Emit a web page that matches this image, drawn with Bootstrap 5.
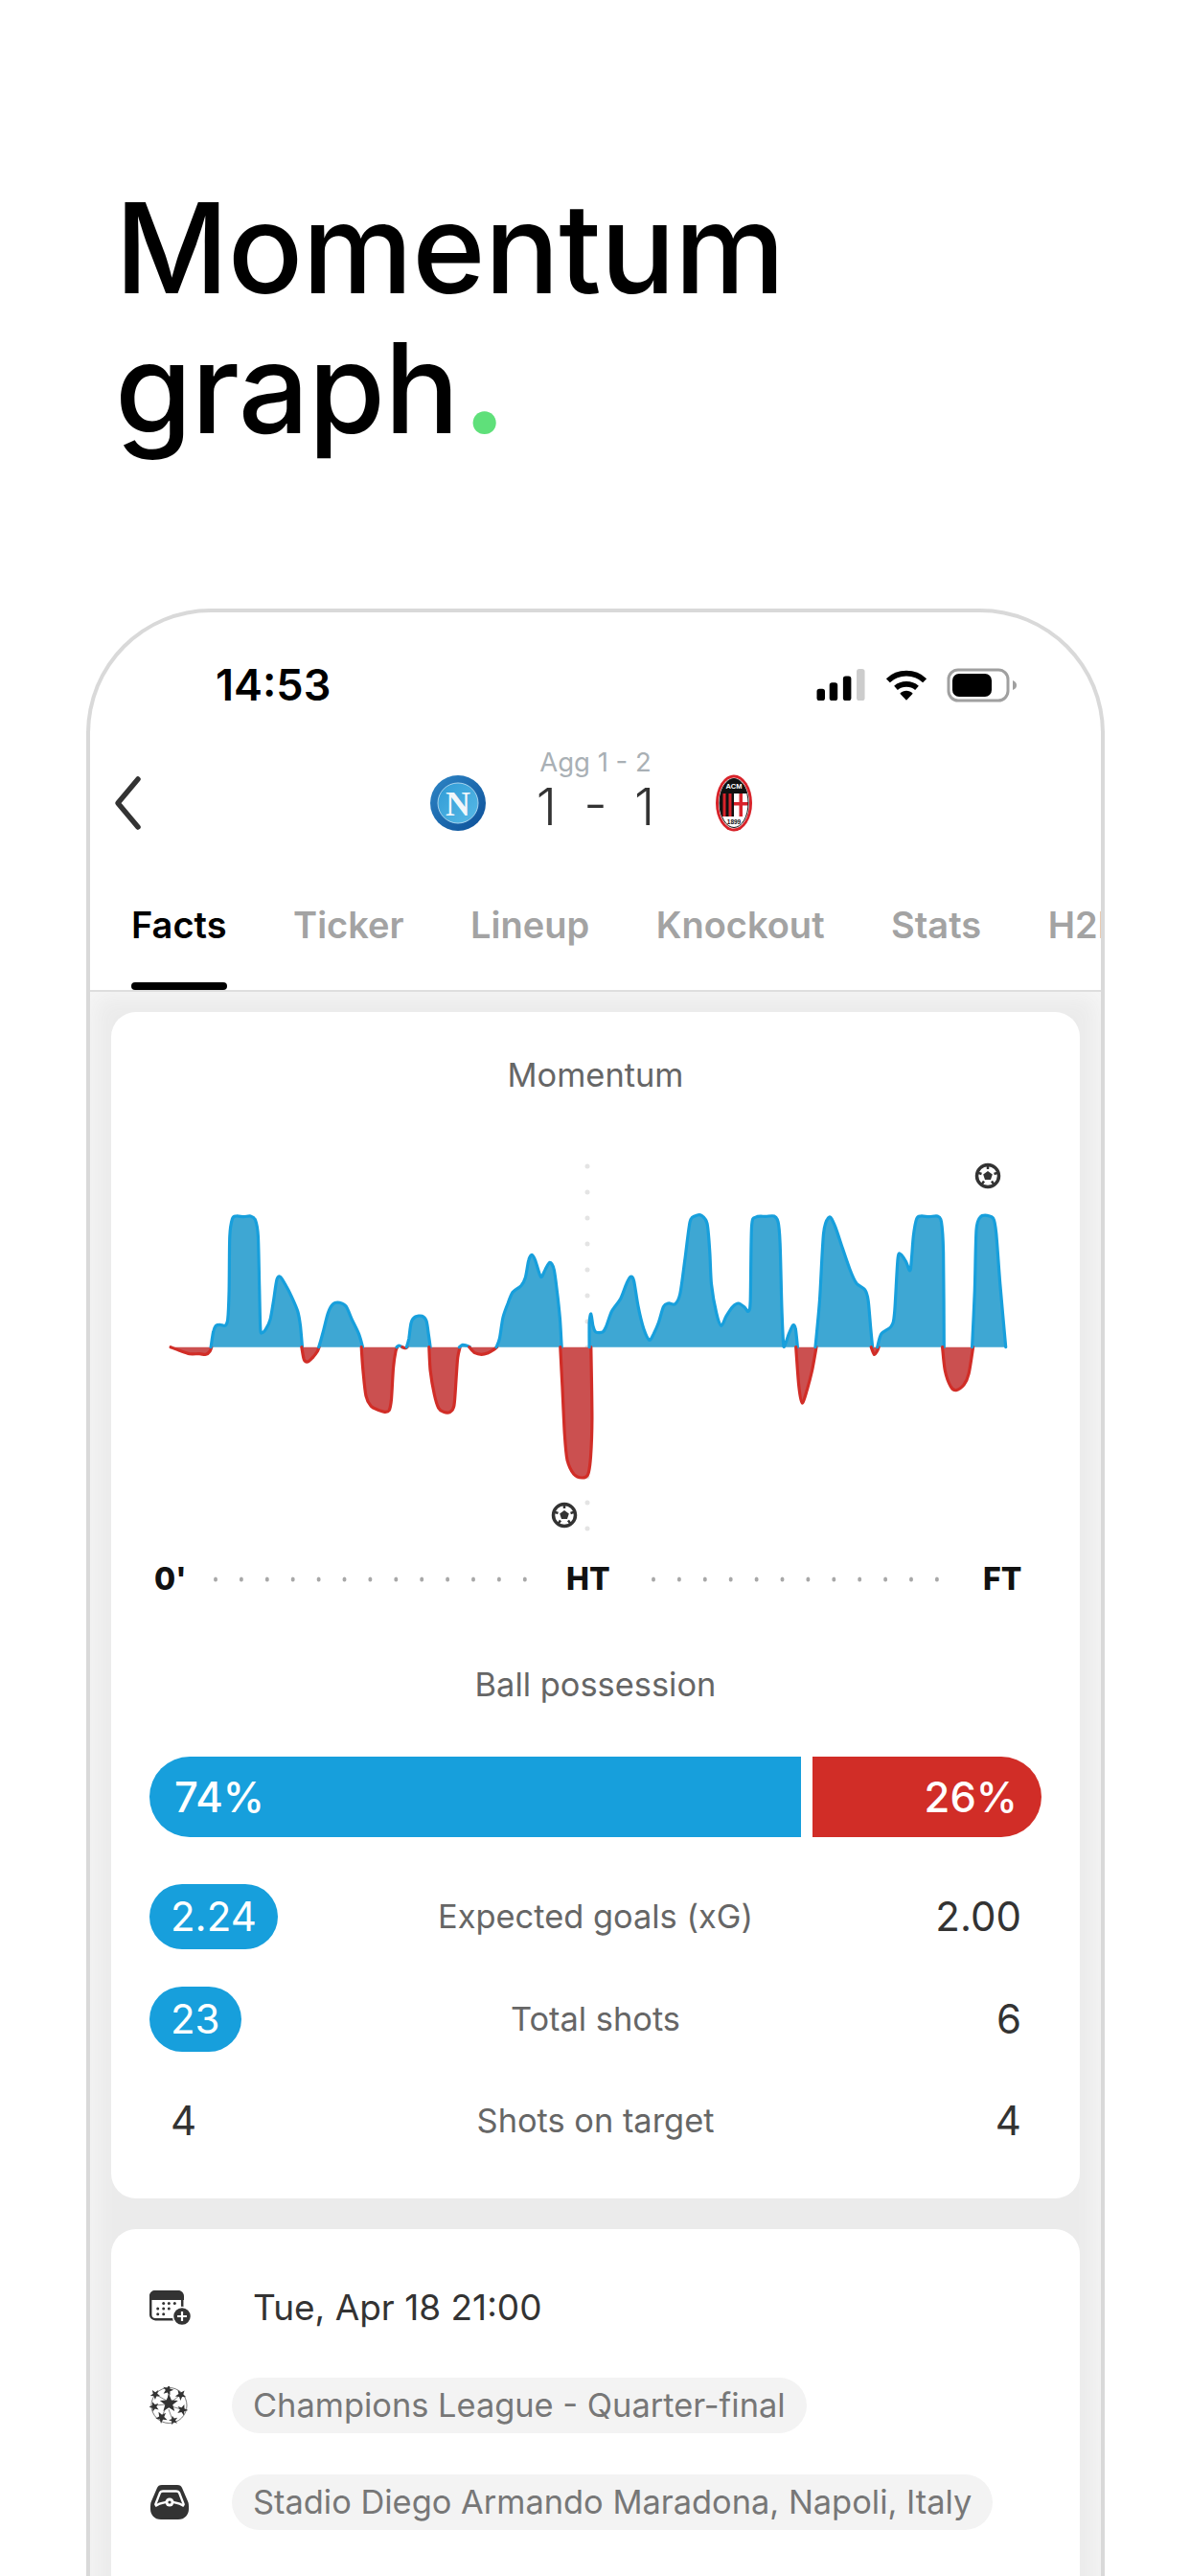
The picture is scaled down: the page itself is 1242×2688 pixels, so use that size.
<!DOCTYPE html>
<html lang="en">
<head>
<meta charset="utf-8">
<title>Momentum graph</title>
<link href="https://cdn.jsdelivr.net/npm/bootstrap@5.3.0/dist/css/bootstrap.min.css" rel="stylesheet">
<style>
html,body{margin:0;background:#fff;height:2688px;overflow:hidden;font-family:Inter,"Liberation Sans",sans-serif;}
.hero{padding:186px 0 0 120px;height:635px;}
.hero-title{font-family:"Inter",sans-serif;font-weight:500;font-size:130px;line-height:146px;color:#000;letter-spacing:-.8px;margin:0;}
.hero-dot{color:#5fe07a;font-weight:800;margin-left:4px;}
.phone{margin:0 89px 0 90px;height:2053px;border:4px solid #d9d9d9;border-bottom:0;border-radius:130px 130px 0 0;overflow:hidden;background:#fff;}
.status-row{height:156px;padding:48px 87px 0 131px;}
.status-time{font-size:45px;font-weight:600;line-height:56px;color:#000;}
.status-icons{gap:20px;height:56px;}
.match-head{height:86px;position:relative;}
.back-ico{position:absolute;left:23px;top:14px;}
.score-wrap{width:180px;text-align:center;margin-bottom:8px;}
.agg{font-size:27.500px;line-height:28px;color:#a9b0b5;margin-top:-14px;margin-bottom:2px;}
.score{font-size:54px;font-weight:300;line-height:62px;color:#333;word-spacing:13px;}
.logo-left{margin-right:24px;}
.logo-right{margin-left:24px;}
.tabs-row{padding:61px 0 0 43px;gap:69.500px;white-space:nowrap;flex-wrap:nowrap;border-bottom:2px solid #dedede;height:154px;}
.tab-item{font-size:38px;line-height:46px;font-weight:600;color:#a3a3a3;height:91px;position:relative;flex:none;}
.tab-item.on{color:#000;}
.tab-item.on::after{content:"";position:absolute;left:0;right:0;bottom:0;height:8px;background:#000;border-radius:5px;}
.feed{background:#ebebeb;padding:21px 22px 0;box-shadow:inset 0 0 24px 4px #f7f7f7;height:1700px;}
.sheet{border:0;border-radius:26px;background:#fff;}
.sheet-a{height:1238px;padding:0 40px;margin-bottom:32px;}
.sheet-b{height:500px;padding:53px 40px;}
.sect-label{font-size:34.400px;line-height:44px;color:#666;text-align:center;}
.sect-first{padding-top:44px;height:88px;}
.chart-box{display:block;margin-top:56px;}
.axis-row{height:40px;margin-top:16px;font-size:32px;line-height:40px;font-weight:800;color:#111;padding-left:5px;white-space:nowrap;}
.ax-zero{width:30px;flex:none;}
.ax-ht{width:45px;flex:none;margin-left:39px;}
.ax-dots-a{margin-left:31px;flex:none;}
.ax-dots-b{margin-left:43px;flex:none;}
.ax-ft{margin-left:17px;flex:none;}
.sect-second{margin-top:68px;}
.poss-bar{height:84px;margin-top:53px;gap:12px;}
.poss-a,.poss-b{color:#fff;font-size:43.500px;font-weight:500;line-height:84px;}
.poss-a{background:#179fdc;border-radius:42px 0 0 42px;padding-left:26px;}
.poss-b{background:#d12d27;border-radius:0 42px 42px 0;padding-right:25px;text-align:right;}
.stat-rows{margin-top:49px;}
.stat-row{display:grid;grid-template-columns:1fr auto 1fr;align-items:center;height:68px;margin-bottom:38.500px;}
.stat-val{font-size:42px;line-height:68px;color:#333;}
.stat-val.right{text-align:right;padding-right:21px;}
.stat-val.left{padding-left:22px;}
.stat-pill{display:inline-block;background:#179fdc;color:#fff;padding:0 22px;height:68px;}
.info-row{height:58px;margin-bottom:43.500px;}
.info-ico{width:86px;flex:none;}
.info-date{font-size:37px;line-height:58px;color:#333;padding-left:22px;}
.info-pill{background:#f3f3f3;color:#777;font-size:34.400px;line-height:58px;padding:0 22px;height:58px;}
</style>
</head>
<body>
<header class="hero">
  <h1 class="hero-title">Momentum<br>graph<span class="hero-dot">.</span></h1>
</header>
<main class="phone">
  <div class="status-row d-flex justify-content-between">
    <div class="status-time">14:53</div>
    <div class="status-icons d-flex align-items-center">
      <svg width="52" height="34" viewBox="0 0 54 36"><rect x="0" y="22" width="9" height="13" rx="3" fill="#000"/><rect x="14" y="15" width="9" height="20" rx="3" fill="#000"/><rect x="29" y="8" width="9" height="27" rx="3" fill="#000"/><rect x="44" y="0" width="9" height="35" rx="3" fill="#ccc"/></svg>
      <svg width="44" height="33" viewBox="0 0 46 34"><path d="M3 11.500C14 1 32 1 43 11.500" fill="none" stroke="#000" stroke-width="6"/><path d="M11.500 19.500C18 14 28 14 34.500 19.500" fill="none" stroke="#000" stroke-width="6"/><path d="M16 25.500C20 21.500 26 21.500 30 25.500L23 33Z" fill="#000"/></svg>
      <svg width="74" height="36" viewBox="0 0 74 36"><rect x="2" y="2" width="62" height="32" rx="10" fill="none" stroke="#a0a0a0" stroke-width="3"/><rect x="6" y="6" width="41" height="24" rx="7" fill="#000"/><path d="M69 13c3 1 4 3 4 5s-1 4-4 5z" fill="#a0a0a0"/></svg>
    </div>
  </div>
  <div class="match-head d-flex justify-content-center align-items-center">
    <svg class="back-ico" width="32" height="58" viewBox="0 0 32 58"><path d="M27 4 6 29l21 25" fill="none" stroke="#333" stroke-width="5.500" stroke-linecap="round" stroke-linejoin="round"/></svg>
    <svg width="60" height="60" viewBox="0 0 60 60" class="logo-left">
      <defs><linearGradient id="napR" x1="0" y1="0" x2="1" y2="1"><stop offset="0" stop-color="#2e86c6"/><stop offset="1" stop-color="#0c4f98"/></linearGradient><linearGradient id="napI" x1="0" y1="0" x2="1" y2="1"><stop offset="0" stop-color="#2f9bd6"/><stop offset="1" stop-color="#58b9e6"/></linearGradient></defs>
      <circle cx="30" cy="30" r="29" fill="url(#napR)"/><circle cx="30" cy="30" r="21" fill="url(#napI)" stroke="#a8d4ee" stroke-width="1"/>
      <text x="30" y="43" text-anchor="middle" font-family="Liberation Serif" font-weight="700" font-size="36" fill="#f1f7fb">N</text>
    </svg>
    <div class="score-wrap">
      <div class="agg">Agg 1 - 2</div>
      <div class="score">1 - 1</div>
    </div>
    <svg width="60" height="60" viewBox="-10 0 60 60" class="logo-right">
      <defs><clipPath id="acmClip"><ellipse cx="20" cy="30" rx="15" ry="25.500"/></clipPath></defs>
      <ellipse cx="20" cy="30" rx="19" ry="29.500" fill="#d8232a"/>
      <ellipse cx="20" cy="30" rx="16" ry="26.500" fill="#fff"/>
      <g clip-path="url(#acmClip)">
        <rect x="0" y="0" width="40" height="20" fill="#111"/>
        <rect x="0" y="20" width="20" height="24" fill="#111"/>
        <path d="M8.500 20h3v24h-3zM14.500 20h3v24h-3z" fill="#d8232a"/>
        <rect x="20" y="20" width="20" height="24" fill="#fff"/>
        <path d="M25.500 20h3.500v24h-3.500zM20 29h16v3.500H20z" fill="#d8232a"/>
        <rect x="0" y="44" width="40" height="16" fill="#fff"/>
      </g>
      <ellipse cx="20" cy="30" rx="15" ry="25.500" fill="none" stroke="#111" stroke-width="1"/>
      <text x="20" y="15" text-anchor="middle" font-family="Liberation Sans" font-size="7.500" font-weight="700" fill="#fff">ACM</text>
      <text x="20" y="52" text-anchor="middle" font-family="Liberation Sans" font-size="6.500" font-weight="700" fill="#111">1899</text>
    </svg>
  </div>
  <nav class="tabs-row d-flex">
    <div class="tab-item on">Facts</div>
    <div class="tab-item">Ticker</div>
    <div class="tab-item">Lineup</div>
    <div class="tab-item">Knockout</div>
    <div class="tab-item">Stats</div>
    <div class="tab-item">H2H</div>
  </nav>
  <div class="feed">
    <section class="card sheet sheet-a">
      <div class="sect-label sect-first">Momentum</div>
      <svg class="chart-box" id="chart" width="932" height="412" viewBox="0 0 932 412">
        <defs>
          <g id="ballmark"><circle r="11.500" fill="#fff" stroke="#333" stroke-width="3.500"/><path d="M0-5 4.800-1.500 3 4H-3L-4.800-1.500Z" fill="#333"/><path d="M0-11 0-7M10.500-3.400 6.500-2M6.500 9 4 5.500M-6.500 9-4 5.500M-10.500-3.400-6.500-2" stroke="#333" stroke-width="2.500"/></g>
        </defs>
        <g id="vdots" fill="#e4e4e4"></g>
        <g id="areas"></g>
        <use href="#ballmark" x="875" y="27"/>
        <use href="#ballmark" x="433" y="381"/>
      </svg>
      <div class="axis-row d-flex align-items-center">
        <span class="ax-zero">0'</span>
        <svg class="ax-dots-a" id="dotsA" width="330" height="6" viewBox="0 0 330 6" fill="#a8a8a8"></svg>
        <span class="ax-ht">HT</span>
        <svg class="ax-dots-b" id="dotsB" width="330" height="6" viewBox="0 0 330 6" fill="#a8a8a8"></svg>
        <span class="ax-ft">FT</span>
      </div>
      <div class="sect-label sect-second">Ball possession</div>
      <div class="poss-bar d-flex">
        <div class="poss-a" style="width:680px">74%</div>
        <div class="poss-b" style="width:239px">26%</div>
      </div>
      <div class="stat-rows">
        <div class="stat-row">
          <div class="stat-val"><span class="stat-pill rounded-pill">2.24</span></div>
          <div class="sect-label">Expected goals (xG)</div>
          <div class="stat-val right">2.00</div>
        </div>
        <div class="stat-row">
          <div class="stat-val"><span class="stat-pill rounded-pill">23</span></div>
          <div class="sect-label">Total shots</div>
          <div class="stat-val right">6</div>
        </div>
        <div class="stat-row">
          <div class="stat-val left">4</div>
          <div class="sect-label">Shots on target</div>
          <div class="stat-val right">4</div>
        </div>
      </div>
    </section>
    <section class="card sheet sheet-b">
      <div class="info-row d-flex align-items-center">
        <div class="info-ico"><svg width="44" height="37" viewBox="0 0 44 37"><rect x="1.200" y="1.200" width="33" height="29" rx="5" fill="#fff" stroke="#333" stroke-width="2.500"/><path d="M0 6a6 6 0 0 1 6-6h24a6 6 0 0 1 6 6v4H0z" fill="#333"/><g fill="#333"><circle cx="14.700" cy="13.500" r="1.500"/><circle cx="20.300" cy="13.500" r="1.500"/><circle cx="26.300" cy="13.500" r="1.500"/><circle cx="8.700" cy="19" r="1.500"/><circle cx="14.700" cy="19" r="1.500"/><circle cx="20.300" cy="19" r="1.500"/><circle cx="8.700" cy="24.700" r="1.500"/><circle cx="14.700" cy="24.700" r="1.500"/></g><circle cx="34" cy="27" r="9.500" fill="#333" stroke="#fff" stroke-width="1.500"/><path d="M34 22v10M29 27h10" stroke="#fff" stroke-width="2.200"/></svg></div>
        <div class="info-date">Tue, Apr 18 21:00</div>
      </div>
      <div class="info-row d-flex align-items-center">
        <div class="info-ico"><svg width="42" height="40" viewBox="0 0 42 40">
          <defs><path id="ucStar" d="M0-1 .26-.34.95-.31.4.12.59.81 0 .42-.59.81-.4.12-.95-.31-.26-.34Z"/></defs>
          <circle cx="20.500" cy="20" r="18.500" fill="none" stroke="#555" stroke-width=".8"/>
          <path d="M20 17 19.500 5M22 17 31 10M23 21 33 24M20 24 24 35M17 22 13 32M17 19 6 20M18 15 7 9" stroke="#555" stroke-width=".7"/>
          <g fill="#333">
            <use href="#ucStar" transform="translate(20.300 18) scale(10)"/>
            <use href="#ucStar" transform="translate(19.300 4) rotate(15) scale(6)"/>
            <use href="#ucStar" transform="translate(32.700 9) rotate(40) scale(6)"/>
            <use href="#ucStar" transform="translate(34.300 24.700) rotate(20) scale(6)"/>
            <use href="#ucStar" transform="translate(25 35.500) rotate(-15) scale(5)"/>
            <use href="#ucStar" transform="translate(12.700 32.500) rotate(-30) scale(6.500)"/>
            <use href="#ucStar" transform="translate(5 21.300) rotate(-20) scale(5.500)"/>
            <use href="#ucStar" transform="translate(6 8.500) rotate(-35) scale(5.500)"/>
          </g></svg></div>
        <div class="info-pill rounded-pill">Champions League - Quarter-final</div>
      </div>
      <div class="info-row d-flex align-items-center">
        <div class="info-ico"><svg width="42" height="38" viewBox="-1 0 42 38"><path d="M12 1H28C31 1 32 2 33 4L39 18C40 20 40 22 40 26C40 32 36 37 29 37H11C4 37 0 32 0 26C0 22 0 20 1 18L7 4C8 2 9 1 12 1Z" fill="#333"/><path d="M5 22 10 9Q11 7.500 13 7.500H27Q29 7.500 30 9L35 22" fill="none" stroke="#fff" stroke-width="2.300"/><path d="M5 23C9 20 13 19.500 16 19H24C27 19.500 31 20 35 23" fill="none" stroke="#fff" stroke-width="2.300"/><circle cx="20" cy="19" r="4.500" fill="#fff"/><circle cx="20" cy="19" r="1.600" fill="#333"/></svg></div>
        <div class="info-pill rounded-pill">Stadio Diego Armando Maradona, Napoli, Italy</div>
      </div>
    </section>
  </div>
</main>
<script>
(function(){
var B='#179fdc',R='#d12d27',FB='#3ea7d3',FR='#cb5050';
var S=[
[R,[163,677,190,688,220,698,250,698,270,700,282,690,287,677]],
[B,[285,677,292,630,300,610,312,607,328,610,336,590,340,500,342,330,350,275,362,267,385,269,405,267,420,280,428,330,432,500,435,620,440,632,452,620,465,590,475,530,485,465,495,457,510,480,530,520,548,565,556,610,562,677]],
[R,[560,677,567,715,578,723,595,708,608,690,613,677]],
[B,[612,677,625,630,640,570,655,542,675,538,695,550,712,590,733,635,745,677]],
[R,[741,677,746,750,755,830,770,862,790,873,812,880,825,875,832,840,838,740,845,690,850,677]],
[B,[848,677,855,672,865,677]],
[R,[865,677,875,680,880,677]],
[B,[878,677,885,650,892,600,905,582,925,580,938,595,945,640,950,677]],
[R,[946,677,950,750,962,825,975,868,990,880,1010,880,1022,860,1028,780,1033,710,1040,677]],
[B,[1038,677,1048,670,1060,672,1070,677]],
[R,[1068,677,1085,695,1105,700,1125,695,1142,685,1152,677]],
[B,[1150,677,1160,650,1170,585,1185,540,1200,505,1225,485,1238,460,1248,405,1258,388,1268,405,1285,457,1298,435,1312,412,1325,435,1335,510,1343,590,1348,677]],
[R,[1344,677,1350,800,1357,950,1365,1030,1385,1075,1410,1086,1428,1075,1436,1020,1440,900,1437,677]],
[B,[1432,677,1432,600,1437,573,1443,610,1452,630,1472,630,1482,615,1500,565,1527,525,1544,480,1557,457,1567,470,1580,550,1597,620,1614,655,1627,635,1642,600,1657,550,1672,540,1692,542,1707,510,1722,400,1737,285,1752,267,1772,265,1789,290,1797,380,1802,480,1817,570,1832,610,1847,580,1867,550,1884,540,1902,552,1914,565,1920,530,1924,300,1937,270,1967,268,1992,267,2004,285,2010,350,2015,550,2020,665,2024,672,2037,635,2049,608,2057,620,2063,677]],
[R,[2058,677,2067,800,2077,852,2092,810,2107,750,2120,677]],
[B,[2117,677,2130,530,2142,320,2160,270,2177,300,2197,360,2222,435,2242,478,2267,497,2277,530,2284,610,2290,677]],
[R,[2286,677,2295,700,2304,690,2309,677]],
[B,[2305,677,2317,635,2347,612,2357,570,2367,400,2377,388,2392,410,2405,435,2414,330,2424,275,2437,267,2462,269,2487,267,2499,285,2505,380,2507,677]],
[R,[2502,677,2510,750,2527,800,2544,812,2567,795,2582,760,2595,677]],
[B,[2592,677,2600,500,2605,310,2617,270,2637,265,2657,275,2665,320,2677,480,2694,677]]
];
var ox=-34, oy=-20, sx=1/2.904, sy=1/3;
function curve(a){
  var p=[],i;for(i=0;i<a.length;i+=2)p.push([ox+a[i]*sx,oy+a[i+1]*sy]);
  var d='M'+p[0][0].toFixed(1)+' '+p[0][1].toFixed(1);
  for(i=0;i<p.length-1;i++){
    var p0=p[i-1]||p[i],p1=p[i],p2=p[i+1],p3=p[i+2]||p2,t=0.14;
    d+='C'+(p1[0]+(p2[0]-p0[0])*t).toFixed(1)+' '+(p1[1]+(p2[1]-p0[1])*t).toFixed(1)+' '+(p2[0]-(p3[0]-p1[0])*t).toFixed(1)+' '+(p2[1]-(p3[1]-p1[1])*t).toFixed(1)+' '+p2[0].toFixed(1)+' '+p2[1].toFixed(1);
  }
  return d;
}
var h='';
S.forEach(function(s){h+='<path d="'+curve(s[1])+'Z" fill="'+(s[0]===B?FB:FR)+'"/>';});
S.forEach(function(s){h+='<path d="'+curve(s[1])+'" fill="none" stroke="'+s[0]+'" stroke-width="3.200" stroke-linecap="round"/>';});
document.getElementById('areas').innerHTML=h;
var v='';for(var y=17;y<400;y+=27)v+='<circle cx="457" cy="'+y+'" r="2.500"/>';
document.getElementById('vdots').innerHTML=v;
function dots(id,n){var s='';for(var i=0;i<n;i++)s+='<ellipse cx="'+(3+i*26.900)+'" cy="3" rx="2" ry="2.500"/>';document.getElementById(id).innerHTML=s;}
dots('dotsA',13);dots('dotsB',12);
})();
</script>
<script src="https://cdn.jsdelivr.net/npm/bootstrap@5.3.0/dist/js/bootstrap.bundle.min.js"></script>
</body>
</html>
